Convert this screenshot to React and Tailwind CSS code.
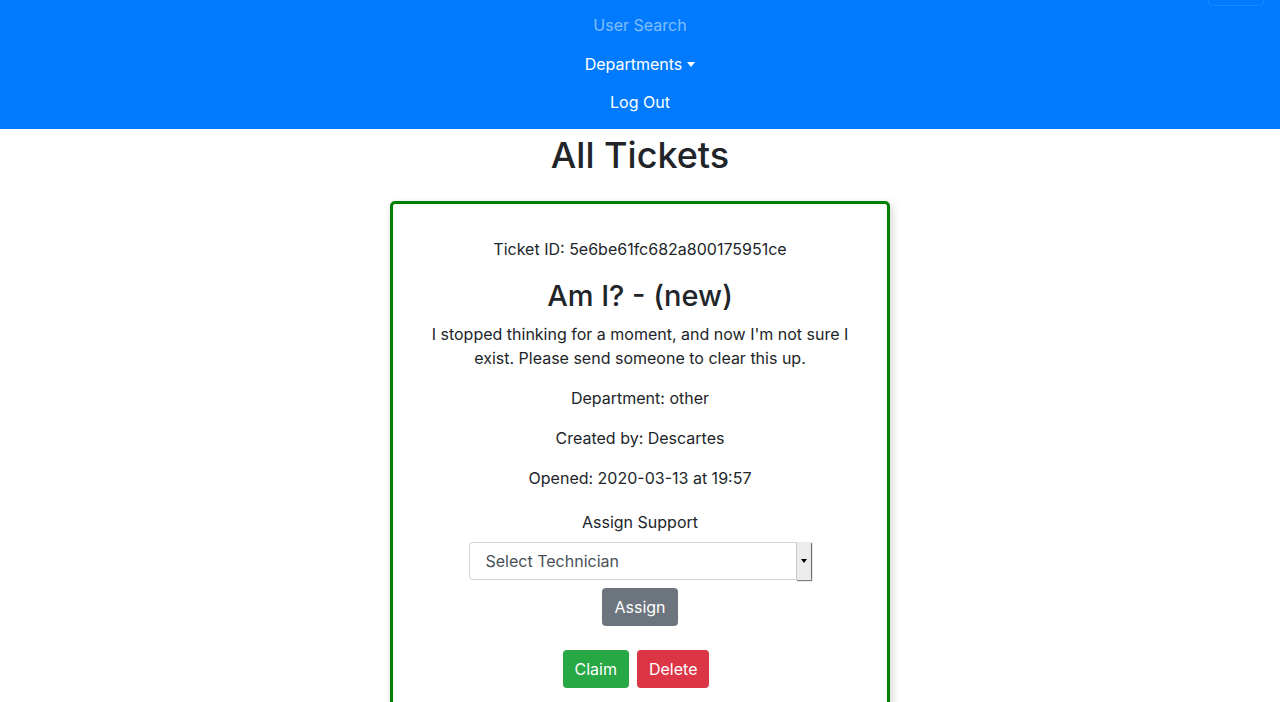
import React from 'react';

function Navbar() {
  return (
    <nav className="bg-[#007bff] px-4 pt-2 pb-[7px]">
      <div className="flex h-10 justify-end">
        <button className="h-10 w-14 rounded-[4px] border border-white/10" aria-label="Toggle navigation" />
      </div>
      <ul className="flex flex-col items-center">
        <li className="py-2 leading-[22.5px] text-white/50">User Search</li>
        <li className="flex items-center py-2 leading-[22.5px] text-white">
          Departments
          <span className="ml-[5px] mt-[1px] inline-block h-0 w-0 border-x-[4.5px] border-t-[5px] border-x-transparent border-t-white" />
        </li>
        <li className="py-2 leading-[22.5px] text-white">Log Out</li>
      </ul>
    </nav>
  );
}

function SelectBox() {
  return (
    <div className="relative flex h-[38px] w-[343px] items-center rounded-[4px] border border-[#ced4da] bg-white pl-4 text-[#495057]">
      <span>Select Technician</span>
      <div className="absolute right-[0px] top-[-1px] flex h-[38px] w-[15px] items-center justify-center border-l border-[#c8c8c8] bg-[#ececec] shadow-[1px_1px_1px_rgba(0,0,0,0.5)]">
        <span className="inline-block h-0 w-0 border-x-[3px] border-t-[4px] border-x-transparent border-t-black" />
      </div>
    </div>
  );
}

function TicketCard() {
  return (
    <div className="mx-auto w-[500px] rounded-[5px] border-[3px] border-[#008000] bg-white px-[36px] pt-[33px] pb-6 text-center shadow-[2px_3px_8px_rgba(0,0,0,0.18)]">
      <p className="mb-4 leading-6">Ticket ID: 5e6be61fc682a800175951ce</p>
      <h3 className="mt-[18px] mb-[9px] text-[29px] font-medium leading-[1.2]">Am I? - (new)</h3>
      <p className="mb-4 leading-6">
        I stopped thinking for a moment, and now I'm not sure I exist. Please send someone to clear this up.
      </p>
      <p className="mb-4 leading-6">Department: other</p>
      <p className="mb-4 leading-6">Created by: Descartes</p>
      <p className="mb-4 leading-6">Opened: 2020-03-13 at 19:57</p>
      <div className="mt-[20px] flex flex-col items-center">
        <label className="mb-2 leading-6">Assign Support</label>
        <SelectBox />
        <button className="mt-2 h-[38px] rounded-[4px] bg-[#6c757d] px-3 text-white">Assign</button>
      </div>
      <div className="mt-6 flex justify-center gap-2">
        <button className="h-[38px] rounded-[4px] bg-[#28a745] px-3 text-white">Claim</button>
        <button className="mr-2 h-[38px] rounded-[4px] bg-[#dc3545] px-3 text-white">Delete</button>
      </div>
    </div>
  );
}

export default function App() {
  return (
    <div className="-mt-[42px] min-h-screen bg-white text-base text-[#212529] font-['Inter',sans-serif]">
      <Navbar />
      <main className="pb-10">
        <h1 className="mt-[5px] mb-[24px] text-center text-[36px] font-medium leading-[1.2]">All Tickets</h1>
        <TicketCard />
      </main>
    </div>
  );
}
